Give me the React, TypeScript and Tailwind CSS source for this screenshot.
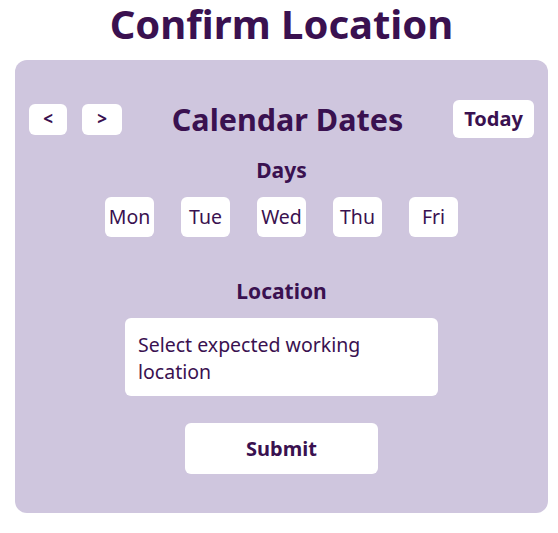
const days = ["Mon", "Tue", "Wed", "Thu", "Fri"];

export default function App() {
  return (
    <div className="flex w-[558px] flex-col items-center bg-white pb-5 pl-[5px] font-['Noto_Sans',sans-serif] text-[#3a1150]">
      <h1 className="text-[40px] font-bold leading-[48px]">Confirm Location</h1>

      <div className="mt-[12px] flex w-[533px] flex-col items-center rounded-xl bg-[#cfc6de] px-[14px] pb-[39px] pt-[39px]">
        <div className="flex w-full items-center justify-between">
          <div className="flex gap-[15px]">
            <button className="h-[31px] w-[38px] rounded-md bg-white text-[17px] font-bold">&lt;</button>
            <button className="h-[31px] w-[40px] rounded-md bg-white text-[17px] font-bold">&gt;</button>
          </div>
          <h2 className="text-[30.5px] font-bold leading-[40px]">Calendar Dates</h2>
          <button className="h-[38px] w-[81px] rounded-md bg-white text-[20px] font-bold">Today</button>
        </div>

        <h3 className="mt-[17px] text-[21px] font-bold leading-[28px]">Days</h3>
        <div className="mt-[13px] flex gap-[27px]">
          {days.map((d) => (
            <button key={d} className="h-[40px] w-[49px] rounded-md bg-white text-[19.5px]">
              {d}
            </button>
          ))}
        </div>

        <h3 className="mt-[40px] text-[21px] font-bold leading-[28px]">Location</h3>
        <div className="mt-[13px] h-[78px] w-[313px] rounded-md bg-white px-[13px] py-[13px] text-[19.5px] leading-[27px]">
          Select expected working location
        </div>

        <button className="mt-[27px] h-[51px] w-[193px] rounded-md bg-white text-[20px] font-bold">Submit</button>
      </div>
    </div>
  );
}
